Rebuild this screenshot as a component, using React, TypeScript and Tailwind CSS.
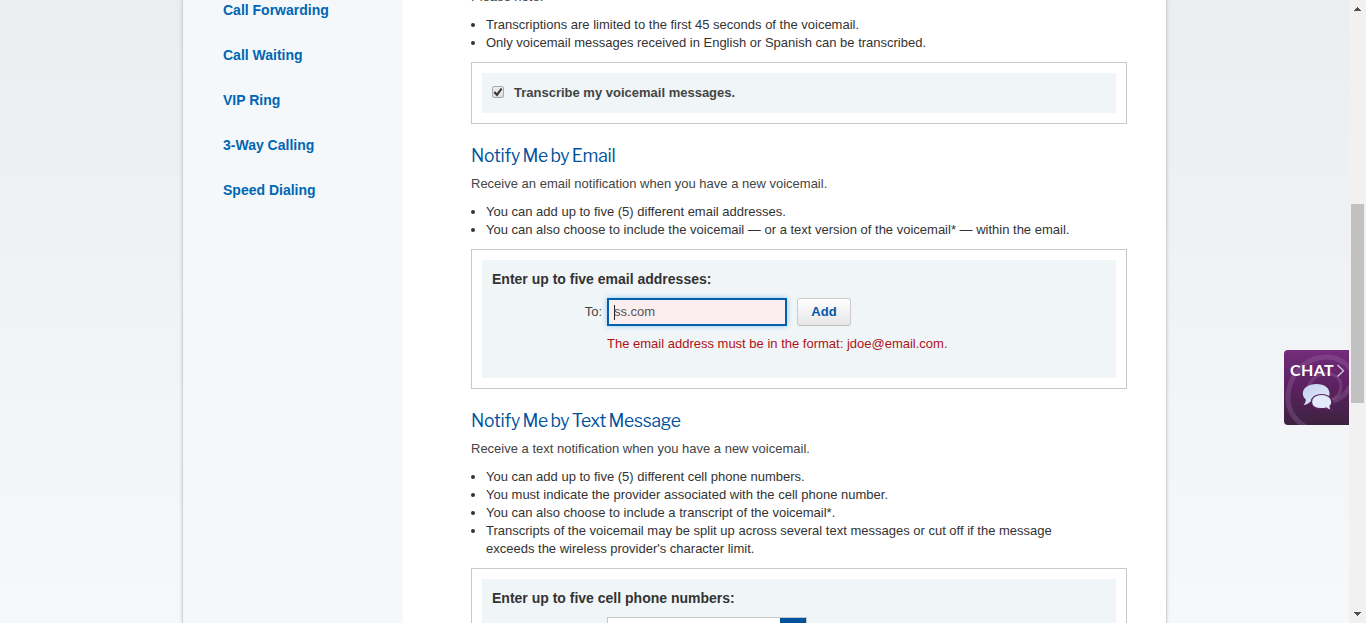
import React from "react";

const links = ["Call Forwarding", "Call Waiting", "VIP Ring", "3-Way Calling", "Speed Dialing"];

function Bullets({ items }: { items: React.ReactNode[] }) {
  return (
    <ul className="mt-[10px] text-[#333]">
      {items.map((item, i) => (
        <li key={i} className="flex whitespace-nowrap">
          <span className="mt-[7px] mr-[11px] size-1 shrink-0 rounded-full bg-[#333]" />
          <span>{item}</span>
        </li>
      ))}
    </ul>
  );
}

function Title({ children }: { children: React.ReactNode }) {
  return (
    <h2 className="mt-[19px] h-[26px] whitespace-nowrap font-['Libre_Franklin','Open_Sans',sans-serif] text-[17.5px] leading-[26px] tracking-[-0.24px] [word-spacing:-1px] text-[#00529b]">
      {children}
    </h2>
  );
}

function Box({ className = "", children }: { className?: string; children: React.ReactNode }) {
  return (
    <div className="mt-[10px] border border-[#c8c8c8] bg-white p-[10px]">
      <div className={"bg-[#f0f5f8] px-[10px] " + className}>{children}</div>
    </div>
  );
}

function ChatButton() {
  return (
    <button className="absolute left-[1284px] top-[350px] h-[75px] w-[65px] overflow-hidden rounded-l-[4px] bg-linear-to-b from-[#742c7b] via-[#5b2160] to-[#3d2240]">
      <svg className="absolute inset-0" width="65" height="75" viewBox="0 0 65 75">
        <defs>
          <linearGradient id="bubble" x1="0" y1="0" x2="1" y2="1">
            <stop offset="0" stopColor="#c3d0f0" />
            <stop offset="1" stopColor="#e6ecfc" />
          </linearGradient>
        </defs>
        <g fill="none" stroke="#a77bb0" strokeOpacity="0.27">
          <path d="M22 77C8 69 1 55 5 39C10 17 27 7 43 7C53 7 60 11 67 19" strokeWidth="5" />
          <path d="M25 52C21 42 25 29 35 25C46 21 57 26 57 36C57 43 53 48 46 50" strokeWidth="3" />
          <path d="M49 51C57 49 62 44 66 36" strokeWidth="5" />
        </g>
        <path d="M53.500 15L59.500 20.800L53.500 26.500" fill="none" stroke="#d9c9dd" strokeWidth="1.300" />
        <path
          d="M32.500 34C40.500 34 45.500 38 45.500 43.500C45.500 49 40.500 52.500 32.500 52.500C30 52.500 28 52.200 26.300 51.500C24.500 53.800 22 55 19.500 55C21.200 53.500 21.800 51.800 21.800 49.500C19.800 47.900 18.800 46 18.800 43.500C18.800 38 24.500 34 32.500 34Z"
          fill="url(#bubble)"
        />
        <path
          d="M37.500 44.500C43.500 44.500 47.800 47.500 47.800 52C47.800 53.700 47.200 55 46 56.200C46 58 46.500 59 48 60.200C45.500 60.200 43.500 59.400 42.200 58C40.700 58.500 39.200 58.700 37.500 58.700C31.500 58.700 27.500 56 27.500 51.700C27.500 47.500 31.500 44.500 37.500 44.500Z"
          fill="#e3eafc"
          stroke="#57245f"
          strokeWidth="1.200"
        />
      </svg>
      <span className="absolute left-[6px] top-[10px] font-[Lato,sans-serif] text-[16px] font-bold leading-[20px] tracking-[0.4px] text-white">
        CHAT
      </span>
    </button>
  );
}

function Scrollbar() {
  return (
    <div className="flex h-full w-[17px] shrink-0 flex-col items-center bg-[#f1f1f1]">
      <svg className="h-[17px] w-[17px] shrink-0" viewBox="0 0 17 17" shapeRendering="crispEdges">
        <path d="M5 11V10H6V9H7V8H8V7H9V8H10V9H11V10H12V11Z" fill="#505050" />
      </svg>
      <div className="mt-[187px] h-[199px] w-[13px] shrink-0 bg-[#c1c1c1]" />
      <svg className="mt-auto h-[17px] w-[17px] shrink-0" viewBox="0 0 17 17" shapeRendering="crispEdges">
        <path d="M5 6V7H6V8H7V9H8V10H9V9H10V8H11V7H12V6Z" fill="#505050" />
      </svg>
    </div>
  );
}

export default function App() {
  return (
    <div className="relative flex h-[623px] w-[1366px] overflow-hidden font-['Liberation_Sans',Arial,sans-serif] text-[13px] leading-[18px] text-[#444]">
      <div className="flex h-full min-w-0 flex-1 bg-linear-to-b from-[#eaeef1] to-[#f7f8fa] pl-[183px]">
        <div className="flex h-full w-[983px] overflow-hidden bg-white shadow-[0_0_1px_1px_#cfd3d6,0_0_5px_rgba(0,0,0,0.16)]">
          <nav className="flex w-[220px] shrink-0 flex-col gap-[27px] bg-[#f4f8fb] pl-10 pt-px text-[14px] font-bold text-[#0066b3]">
            {links.map((l) => (
              <a key={l} className="whitespace-nowrap">
                {l}
              </a>
            ))}
          </nav>
          <main className="-mt-[12px] ml-[68px] w-[656px] shrink-0">
            <p>Please note:</p>
            <Bullets
              items={[
                "Transcriptions are limited to the first 45 seconds of the voicemail.",
                "Only voicemail messages received in English or Spanish can be transcribed.",
              ]}
            />
            <Box className="flex h-[40px] items-center">
              <span className="mb-[2px] flex size-[12px] items-center justify-center rounded-[2px] border border-[#aaa] bg-linear-to-b from-[#eee] to-[#ddd]">
                <svg width="10" height="10" viewBox="0 0 10 10">
                  <path d="M1.300 5L4 7.800L8.600 1.500" fill="none" stroke="#333" strokeWidth="2.100" />
                </svg>
              </span>
              <span className="ml-[10px] font-bold">Transcribe my voicemail messages.</span>
            </Box>

            <Title>Notify Me by Email</Title>
            <p className="mt-[6px]">Receive an email notification when you have a new voicemail.</p>
            <Bullets
              items={[
                "You can add up to five (5) different email addresses.",
                "You can also choose to include the voicemail — or a text version of the voicemail* — within the email.",
              ]}
            />
            <Box className="h-[118px] pt-[10px]">
              <h3 className="text-[14px] font-bold text-[#333]">Enter up to five email addresses:</h3>
              <div className="mt-[10px] flex h-[28px] items-center">
                <label className="w-[110px] text-right">To:</label>
                <div className="ml-[5px] flex h-[28px] w-[180px] items-center border-2 border-[#0061ad] bg-[#fceeee] pl-[5px] text-[#555] shadow-[0_0_5px_#8fc3ee]">
                  <span className="-mr-px h-[15px] w-px bg-[#222]" />
                  ss.com
                </div>
                <button className="ml-[10px] h-[28px] w-[54px] rounded-[3px] border border-[#ccc] border-b-[#bbb] bg-linear-to-b from-white to-[#e6e6e6] font-bold text-[#0059a8]">
                  Add
                </button>
              </div>
              <p className="ml-[115px] mt-[9px] text-[#b01116]">
                The email address must be in the format: jdoe@email.com.
              </p>
            </Box>

            <Title>Notify Me by Text Message</Title>
            <p className="mt-[6px]">Receive a text notification when you have a new voicemail.</p>
            <Bullets
              items={[
                "You can add up to five (5) different cell phone numbers.",
                "You must indicate the provider associated with the cell phone number.",
                "You can also choose to include a transcript of the voicemail*.",
                <>
                  Transcripts of the voicemail may be split up across several text messages or cut off if the message
                  <br />
                  exceeds the wireless provider's character limit.
                </>,
              ]}
            />
            <Box className="h-[118px] pt-[10px]">
              <h3 className="text-[14px] font-bold text-[#333]">Enter up to five cell phone numbers:</h3>
              <div className="ml-[115px] mt-[10px] flex h-[28px] w-[200px] justify-end border border-[#c4c8cb] bg-white">
                <span className="h-full w-[26px] bg-[#00529b]" />
              </div>
            </Box>
          </main>
        </div>
      </div>
      <Scrollbar />
      <ChatButton />
    </div>
  );
}
